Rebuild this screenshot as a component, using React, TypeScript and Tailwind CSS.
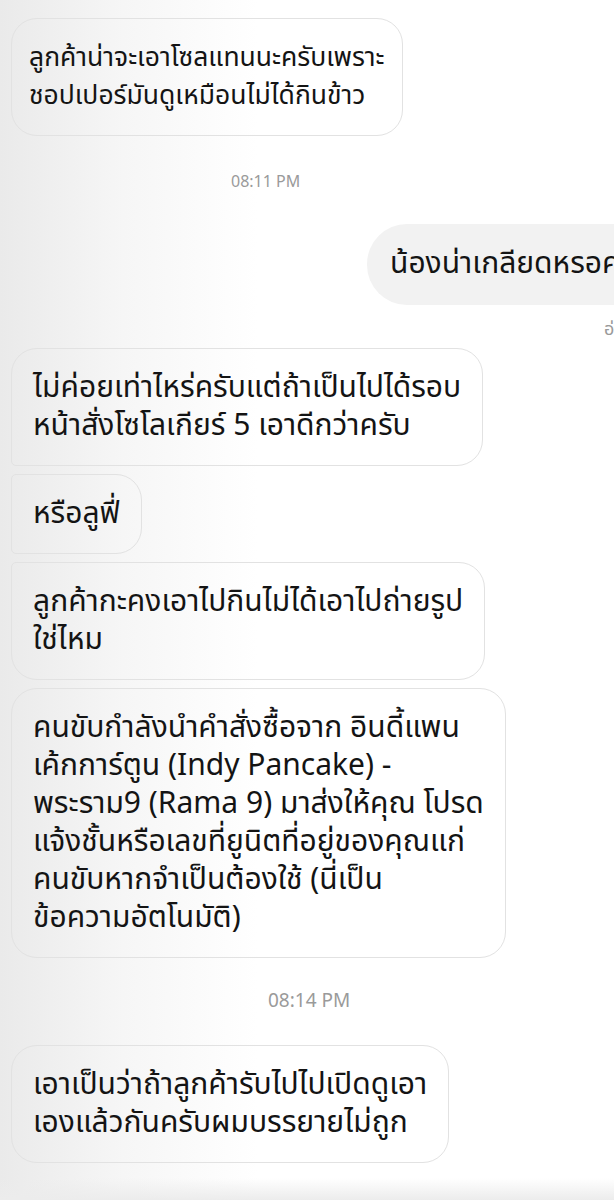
import React from "react";

const font = { fontFamily: '"Noto Sans Thai", "Noto Sans", "Liberation Sans", sans-serif' };

function Bubble({ lines, className }: { lines: string[]; className: string }) {
    return (
        <div
            className={`ml-[11px] w-fit border border-[#e2e2e2] py-[20px] leading-[38px] text-[#141414] whitespace-nowrap ${className}`}
        >
            {lines.map((l) => (
                <div key={l}>{l}</div>
            ))}
        </div>
    );
}

function Time({ label, className }: { label: string; className: string }) {
    return <div className={`leading-[20px] text-[#9a9a9a] ${className}`}>{label}</div>;
}

export default function App() {
    return (
        <div
            className="relative min-h-[1200px] w-[614px] overflow-hidden bg-[linear-gradient(90deg,#eaeaea_0%,#f6f6f6_20%,#ffffff_42%)]"
            style={font}
        >
            <div className="pt-[18px]">
                <Bubble
                    className="rounded-[26px] px-[17px] text-[26.5px]"
                    lines={["ลูกค้าน่าจะเอาโซลแทนนะครับเพราะ", "ชอปเปอร์มันดูเหมือนไม่ได้กินข้าว"]}
                />

                <div className="mt-[36px]">
                    <Time label="08:11 PM" className="pl-[231px] text-[16px]" />
                </div>

                {/* outgoing */}
                <div className="mt-[32px] flex">
                    <div className="ml-[367px] h-[81px] shrink-0 rounded-l-[40px] bg-[#f2f2f2] pl-[23px] pr-[40px] text-[30px] leading-[81px] text-[#141414] whitespace-nowrap">
                        น้องน่าเกลียดหรอคะ
                    </div>
                </div>
                <div className="mt-[15px] pl-[604px] text-[18px] leading-[20px] text-[#9a9a9a] whitespace-nowrap">อ่านแล้ว</div>

                <div className="mt-[8px] flex flex-col gap-[8px]">
                    <Bubble
                        className="rounded-[26px] rounded-bl-[5px] px-[21px] text-[30px]"
                        lines={["ไม่ค่อยเท่าไหร่ครับแต่ถ้าเป็นไปได้รอบ", "หน้าสั่งโซโลเกียร์ 5 เอาดีกว่าครับ"]}
                    />
                    <Bubble className="rounded-r-[26px] rounded-l-[5px] px-[21px] text-[30px]" lines={["หรือลูฟี่"]} />
                    <Bubble
                        className="rounded-[26px] rounded-tl-[5px] px-[21px] text-[30px]"
                        lines={["ลูกค้ากะคงเอาไปกินไม่ได้เอาไปถ่ายรูป", "ใช่ไหม"]}
                    />
                    <Bubble
                        className="rounded-[26px] px-[21px] text-[30px]"
                        lines={[
                            "คนขับกำลังนำคำสั่งซื้อจาก อินดี้แพน",
                            "เค้กการ์ตูน (Indy Pancake) -",
                            "พระราม9 (Rama 9) มาส่งให้คุณ โปรด",
                            "แจ้งชั้นหรือเลขที่ยูนิตที่อยู่ของคุณแก่",
                            "คนขับหากจำเป็นต้องใช้ (นี่เป็น",
                            "ข้อความอัตโนมัติ)",
                        ]}
                    />
                </div>

                <div className="mt-[34px]">
                    <Time label="08:14 PM" className="pl-[268px] text-[19px]" />
                </div>

                <div className="mt-[33px]">
                    <Bubble
                        className="rounded-[26px] px-[21px] text-[30px]"
                        lines={["เอาเป็นว่าถ้าลูกค้ารับไปไปเปิดดูเอา", "เองแล้วกันครับผมบรรยายไม่ถูก"]}
                    />
                </div>
            </div>

            {/* bottom bar edge */}
            <div className="absolute bottom-0 left-0 h-[22px] w-full bg-[linear-gradient(180deg,#ffffff00_0%,#ececec_100%)]" />
        </div>
    );
}
